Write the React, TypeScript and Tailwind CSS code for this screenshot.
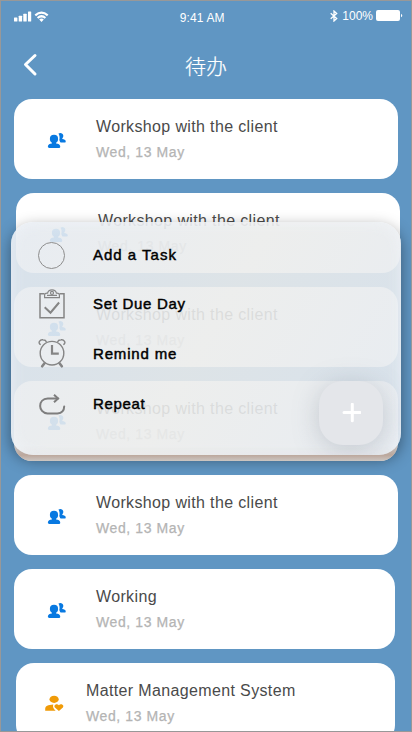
import React from "react";

const sans = "font-['Liberation_Sans','Noto_Sans_CJK_SC',sans-serif]";

function PeopleIcon() {
  return (
    <svg width="20" height="18" viewBox="0 0 20 18" fill="#0879e1" className="shrink-0">
      <circle cx="7" cy="6.900" r="4.100" />
      <path d="M4.900 9h4.200v2.400c2.200.3 4.100.9 4.100 2.900v.4c0 .8-.3 1.200-1 1.200H1.900c-.7 0-1-.4-1-1.200v-.4c0-2 1.900-2.600 4-2.900z" />
      <path d="M11.500 1.500C13.100.300 16.100.900 16.300 3.500c.1 1.200-.3 2.100-1 2.800v.8c1.700.3 3.400.8 3.400 2.200V9.700q0 .7-.6.700H13.700q-.8 0-.8-.8L12.300 8C12.900 5.800 12.600 3.600 11.500 1.500z" />
    </svg>
  );
}

function CareIcon() {
  return (
    <svg width="20" height="18" viewBox="0 0 20 18" fill="#f09b08" className="shrink-0">
      <ellipse cx="9.100" cy="4.300" rx="4.600" ry="3.600" />
      <path d="M.2 15.800v-2c0-2.700 2.700-4.200 8.100-4.400-.9 2.200.2 4.100 2.300 6.400z" />
      <path d="M13.900 15.900 9.900 12.400c-1.700-1.900 1.700-4.600 4-2.200 2.300-2.400 5.700.3 4 2.200z" />
    </svg>
  );
}

type Item = { title: string; box: string; care?: boolean };
const items: Item[] = [
  { title: "Workshop with the client", box: "ml-[13px] w-[384px]" },
  { title: "Workshop with the client", box: "ml-[15px] w-[384px]" },
  { title: "Workshop with the client", box: "ml-[13px] w-[384px]" },
  { title: "Workshop with the client", box: "ml-[13px] w-[384px]" },
  { title: "Workshop with the client", box: "ml-[13px] w-[384px]" },
  { title: "Working", box: "ml-[13px] w-[381px]" },
  { title: "Matter Management System", box: "ml-[15px] w-[379px]", care: true },
];

function Card({ item }: { item: Item }) {
  return (
    <div className={`flex h-20 shrink-0 items-center rounded-[18px] bg-white ${item.box} ${item.care ? "pl-[29px]" : "pl-[33px]"}`}>
      <div className={item.care ? "pt-px" : "pt-[3px]"}>{item.care ? <CareIcon /> : <PeopleIcon />}</div>
      <div className={item.care ? "pl-[21px] pt-px" : "pl-[29px]"}>
        <div className="h-[26px] whitespace-nowrap text-[16px] leading-[26px] tracking-[0.36px] text-[#4a4a4a]">{item.title}</div>
        <div className="h-[25px] whitespace-nowrap text-[14px] leading-[25px] tracking-[0.6px] text-[#b4b4b4] [-webkit-text-stroke:0.25px_#b4b4b4]">Wed, 13 May</div>
      </div>
    </div>
  );
}

function StatusBar() {
  return (
    <div className="grid h-[30px] shrink-0 grid-cols-3 text-white">
      <div className="flex items-start pl-[13px] pt-[10px]">
        <svg width="36" height="12" viewBox="0 0 36 12" fill="white">
          <rect x="0" y="6.500" width="3.400" height="4" rx=".5" />
          <rect x="4.700" y="4.700" width="3.400" height="5.800" rx=".5" />
          <rect x="9.300" y="2.700" width="3.400" height="7.800" rx=".5" />
          <rect x="14" y=".5" width="3.200" height="10" rx=".5" />
          <g fill="none" stroke="white" strokeWidth="2.200">
            <path d="M21.300 4.400Q27.500-1 33.700 4.400" />
            <path d="M23.600 7Q27.500 3.500 31.400 7" />
          </g>
          <path d="m25.200 8.600 2.300 2.500 2.300-2.500q-2.300-2-4.600 0z" />
        </svg>
      </div>
      <div className="whitespace-nowrap pl-[42px] pt-[9px] text-[12px] leading-4 tracking-[0.15px]">9:41 AM</div>
      <div className="flex items-start pl-[56px] pt-[9px]">
        <svg width="8" height="12" viewBox="0 0 8 12" fill="none" stroke="white" strokeWidth="1.300" className="shrink-0">
          <path d="m.7 3.200 6 5.400L4 11V1l2.700 2.400-6 5.400" />
        </svg>
        <span className="-mt-px ml-[4px] w-[34px] shrink-0 text-[12px] leading-[14px]">100%</span>
        <svg width="28" height="12" viewBox="0 0 28 12" fill="white" className="shrink-0">
          <rect width="24" height="11" rx="2" />
          <path d="M25 3.700q2.600 1.800 0 3.600z" />
        </svg>
      </div>
    </div>
  );
}

function CircleIcon() {
  return (
    <svg width="28" height="28" viewBox="0 0 28 28" fill="none" stroke="#8d8d8d">
      <circle cx="13.500" cy="13.500" r="13" />
    </svg>
  );
}
function ClipboardIcon() {
  return (
    <svg width="26" height="30" viewBox="0 0 26 30" fill="none" stroke="#858585" strokeWidth="1.200">
      <path d="M5.500 4.700H1v24h24v-24h-4.500" strokeWidth="1.500" />
      <path d="M5.600 8.600V6q0-1.900 2.500-1.900h.5C9.400-.3 16.600-.3 17.400 4.100h.5q2.500 0 2.500 1.900v2.600z" />
      <path d="M8 6.300h10" />
      <circle cx="13" cy="3.900" r="1.500" />
      <path d="m5.700 18.200 5.800 5.500 8.600-10.200" strokeWidth="2" />
    </svg>
  );
}
function ClockIcon() {
  return (
    <svg width="28" height="29" viewBox="0 0 28 29" fill="none" stroke="#858585" strokeWidth="1.400">
      <circle cx="14" cy="14.200" r="11.800" />
      <path d="M2.700 5.700C-.8 3.700 2.200.3 5 .8c1.700.2 3 .9 3.500 2.200M25.300 5.700c3.500-2 .5-5.400-2.300-4.900-1.700.2-3 .9-3.500 2.200" />
      <path d="m6.500 24.300-2.300 3m17.300-3 2.300 3" strokeWidth="2.600" strokeLinecap="round" />
      <path d="M14 6v8.600h6.800" strokeWidth="2.200" />
    </svg>
  );
}
function RepeatIcon() {
  return (
    <svg width="28" height="24" viewBox="0 0 28 24" fill="none" stroke="#7e7e7e" strokeWidth="2">
      <path d="M19 6.500H8.800C-1.600 6.900-1.100 20.800 8.500 21.500h9.900q6.700-.8 6.800-7" strokeLinecap="round" />
      <path d="m15 2.700 4.100 3.800L15 10.300" />
    </svg>
  );
}

const actions = [
  { label: "Add a Task", icon: <CircleIcon />, row: "h-[27px] mt-[20px]", cell: "pl-[27px]", text: "pb-px tracking-[1px]" },
  { label: "Set Due Day", icon: <ClipboardIcon />, row: "h-[30px] mt-[20px]", cell: "pl-[28px]", text: "tracking-[0.7px]" },
  { label: "Remind me", icon: <ClockIcon />, row: "h-[29px] mt-[20px]", cell: "pl-[27px]", text: "tracking-[0.84px]" },
  { label: "Repeat", icon: <RepeatIcon />, row: "h-[24px] mt-[24px]", cell: "pl-[28px]", text: "tracking-[0.64px]" },
];

export default function App() {
  return (
    <main className={`relative flex h-[732px] w-[412px] flex-col overflow-hidden border border-[#989898] bg-[#6096c3] ${sans}`}>
      <StatusBar />
      <header className="flex h-[68px] shrink-0 items-start text-white">
        <svg width="16" height="24" viewBox="0 0 16 24" className="ml-[22px] mt-[22px]" fill="none" stroke="white" strokeWidth="3" strokeLinecap="round" strokeLinejoin="round">
          <path d="M12 2.500 2.500 11.500l9.500 9.500" />
        </svg>
        <h1 className="ml-[146px] mt-[19px] font-['Noto_Sans_CJK_SC',sans-serif] text-[21px] font-light leading-[30px] [-webkit-text-stroke:0.2px_white]">待办</h1>
      </header>
      <div className="flex flex-col gap-[14px]">
        {items.map((item, i) => <Card key={i} item={item} />)}
      </div>
      <div className="absolute left-[10px] top-[221px] h-[233px] w-[390px] rounded-[22px] shadow-[0_5px_15px_rgba(0,0,0,0.42)]" />
      <div className="absolute left-[13px] top-[436px] h-[24px] w-[384px] rounded-b-[18px] bg-[linear-gradient(to_bottom,transparent_35%,#bca79c_75%,#ccc6c2_100%)]" />
      <section className="absolute left-[10px] top-[221px] h-[233px] w-[390px] overflow-hidden rounded-[22px] bg-[linear-gradient(120deg,rgba(229,234,240,0.9),rgba(235,236,235,0.9)_50%,rgba(229,234,240,0.9))] shadow-[inset_0_0_16px_rgba(245,248,253,0.6)]">
        {actions.map((a) => (
          <div key={a.label} className={`flex items-center ${a.row}`}>
            <div className={`w-[82px] shrink-0 ${a.cell}`}>{a.icon}</div>
            <span className={`whitespace-nowrap text-[15px] leading-5 text-black [-webkit-text-stroke:0.45px_black] ${a.text}`}>{a.label}</span>
          </div>
        ))}
        <button className="absolute left-[308px] top-[159px] flex size-16 items-center justify-center rounded-[24px] bg-[#e4e6ea] shadow-[0_4px_26px_rgba(120,130,140,0.34)]">
          <svg width="20" height="20" viewBox="0 0 20 20" stroke="white" strokeWidth="3" strokeLinecap="round">
            <path d="M11.300 1.200v16.600M3 9.500h16" />
          </svg>
        </button>
      </section>
    </main>
  );
}
